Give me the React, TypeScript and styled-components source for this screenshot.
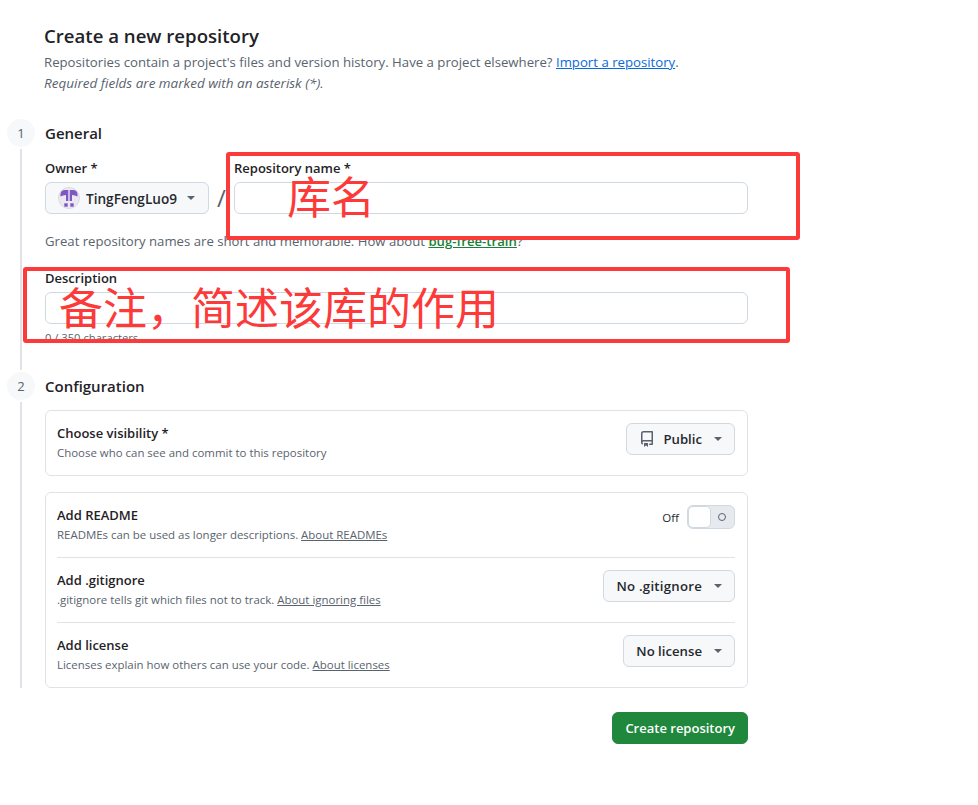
import styled, { createGlobalStyle } from "styled-components";

const GlobalStyle = createGlobalStyle`
  html, body {
    margin: 0;
    background: #fff;
  }
  body {
    font-family: "Open Sans", "Noto Sans", "Liberation Sans", sans-serif;
    color: #1f2328;
    font-size: 14px;
  }
`;

const Page = styled.main`
  position: relative;
  width: 978px;
  height: 805px;
  padding: 23px 0 0 7px;
  box-sizing: border-box;
  overflow: hidden;
`;

const Header = styled.header`
  margin-left: 37px;
  margin-bottom: 25px;
`;

const Title = styled.h1`
  margin: 0 0 4px;
  font-size: 18.6px;
  line-height: 25px;
  font-weight: 600;
`;

const Lead = styled.p`
  margin: 0;
  font-size: 13.2px;
  line-height: 21px;
  color: #59636e;
  white-space: nowrap;

  a {
    color: #0969da;
  }
`;

const Required = styled(Lead)`
  font-size: 13.5px;
  font-style: italic;
`;

const Step = styled.section<{ $height: number }>`
  display: grid;
  grid-template-columns: 28px 703px;
  column-gap: 10px;
  height: ${(props) => props.$height}px;
`;

const Rail = styled.div`
  display: flex;
  flex-direction: column;
  align-items: center;
`;

const StepNumber = styled.div`
  width: 28px;
  height: 28px;
  flex: none;
  border-radius: 50%;
  background: #f6f8fa;
  color: #59636e;
  font-size: 13px;
  display: flex;
  align-items: center;
  justify-content: center;
`;

const RailLine = styled.div`
  width: 2px;
  flex: 1;
  margin: 2px 0;
  background: #dfe3e8;
`;

const StepTitle = styled.h2`
  margin: 0;
  height: 28px;
  font-size: 15px;
  line-height: 28px;
  font-weight: 600;
`;

const OwnerRow = styled.div`
  display: flex;
  align-items: flex-end;
  margin-top: 12px;
`;

const Field = styled.div<{ $grow?: boolean }>`
  display: flex;
  flex-direction: column;
  flex: ${(props) => (props.$grow ? 1 : "none")};
`;

const Label = styled.label`
  font-size: 13px;
  line-height: 18px;
  font-weight: 600;
  margin-bottom: 5px;
`;

const Slash = styled.span`
  width: 25px;
  height: 32px;
  text-align: center;
  font-size: 24px;
  line-height: 32px;
  color: #59636e;
`;

const TextInput = styled.div`
  height: 32px;
  box-sizing: border-box;
  border: 1px solid #d1d9e0;
  border-radius: 6px;
  background: #fff;
`;

const Hint = styled.p`
  margin: 17px 0 0;
  font-size: 13.17px;
  line-height: 20px;
  color: #59636e;
  white-space: nowrap;

  a {
    color: #1a7f37;
    font-weight: 600;
  }
`;

const DescriptionField = styled(Field)`
  margin-top: 18px;
`;

const Counter = styled.div`
  margin-top: 7px;
  font-size: 11.2px;
  line-height: 14px;
  color: #59636e;
`;

const Card = styled.div<{ $gap?: number }>`
  border: 1px solid #dfe3e8;
  border-radius: 6px;
  padding: 0 12px 0 11px;
  margin-top: ${(props) => props.$gap ?? 0}px;
`;

const Row = styled.div<{ $divided?: boolean }>`
  height: ${(props) => (props.$divided ? 65 : 64)}px;
  box-sizing: border-box;
  padding-top: 12px;
  display: flex;
  justify-content: space-between;
  align-items: flex-start;
  border-top: ${(props) => (props.$divided ? "1px solid #dfe3e8" : "none")};
`;

const RowText = styled.div`
  display: flex;
  flex-direction: column;
`;

const RowTitle = styled.span`
  font-size: 13px;
  line-height: 20px;
  font-weight: 600;
`;

const RowHint = styled.span`
  font-size: 11.45px;
  line-height: 20px;
  color: #59636e;

  a {
    color: #59636e;
  }
`;

const SelectButton = styled.button<{ $tracking?: number }>`
  height: 32px;
  box-sizing: border-box;
  padding: 0 12px;
  display: flex;
  align-items: center;
  gap: 8px;
  border: 1px solid #d1d9e0;
  border-radius: 6px;
  background: #f6f8fa;
  color: #25292e;
  font: 600 13.2px "Open Sans", "Noto Sans", sans-serif;
  letter-spacing: ${(props) => props.$tracking ?? 0}px;
  white-space: nowrap;
`;

const OwnerButton = styled(SelectButton)`
  width: 164px;
  gap: 6px;
  font-size: 13.6px;
`;

const Caret = styled.i`
  width: 0;
  height: 0;
  margin-left: 4px;
  border-left: 4px solid transparent;
  border-right: 4px solid transparent;
  border-top: 4px solid #59636e;
`;

const ToggleWrap = styled.div`
  display: flex;
  align-items: center;
  gap: 8px;
  font-size: 11.5px;
  color: #25292e;
`;

const Toggle = styled.div`
  width: 48px;
  height: 24px;
  box-sizing: border-box;
  border: 1px solid #d1d9e0;
  border-radius: 6px;
  background: #e6eaef;
  display: flex;
  align-items: center;
  justify-content: space-between;
  padding-right: 8px;
`;

const Knob = styled.div`
  width: 23px;
  height: 22px;
  box-sizing: border-box;
  border: 1px solid #d1d9e0;
  border-radius: 5px;
  background: #fff;
`;

const OffMark = styled.div`
  width: 8px;
  height: 8px;
  box-sizing: border-box;
  border: 1.5px solid #59636e;
  border-radius: 50%;
`;

const Footer = styled.div`
  display: flex;
  justify-content: flex-end;
  width: 741px;
  margin-top: 22px;
`;

const CreateButton = styled.button`
  height: 32px;
  padding: 0 12px;
  border: 1px solid #1f883d;
  border-radius: 6px;
  background: #1f883d;
  color: #fff;
  font: 600 13px "Open Sans", "Noto Sans", sans-serif;
`;

const Callout = styled.div<{ $x: number; $y: number; $w: number; $h: number }>`
  position: absolute;
  left: ${(props) => props.$x}px;
  top: ${(props) => props.$y}px;
  width: ${(props) => props.$w}px;
  height: ${(props) => props.$h}px;
  box-sizing: border-box;
  border: 4px solid #fd3a3a;
  border-radius: 3px;
`;

const CalloutText = styled.span<{ $x: number; $y: number }>`
  position: absolute;
  left: ${(props) => props.$x}px;
  top: ${(props) => props.$y}px;
  color: #fd3a3a;
  font-family: "Noto Sans CJK SC", sans-serif;
  font-size: 44px;
  line-height: 50px;
  white-space: nowrap;
`;

const Avatar = () => (
  <svg width="22" height="22" viewBox="0 0 22 22" style={{ flex: "none" }}>
    <circle cx="11" cy="11" r="10.5" fill="#ebe9f0" stroke="#dcd9e4" />
    <path d="M2.500 7Q3 3 7 3h3.300v11H8V8Q5 8 2.500 9.500zM19.500 7Q19 3 15 3h-3.300v11H14V8q3 0 5.500 1.500z" fill="#7e57c2" />
    <rect x="6.300" y="16.300" width="3.400" height="3.400" fill="#7e57c2" />
    <rect x="12.300" y="16.300" width="3.400" height="3.400" fill="#7e57c2" />
  </svg>
);

const RepoIcon = () => (
  <svg width="16" height="16" viewBox="0 0 16 16" fill="#59636e">
    <path d="M2 2.5A2.5 2.5 0 0 1 4.5 0h8.75a.75.75 0 0 1 .75.75v12.5a.75.75 0 0 1-.75.75h-2.5a.75.75 0 0 1 0-1.5h1.75v-2h-8a1 1 0 0 0-.714 1.7.75.75 0 1 1-1.072 1.05A2.495 2.495 0 0 1 2 11.5Zm10.5-1h-8a1 1 0 0 0-1 1v6.708A2.486 2.486 0 0 1 4.5 9h8ZM5 12.25a.25.25 0 0 1 .25-.25h3.5a.25.25 0 0 1 .25.25v3.25a.25.25 0 0 1-.4.2l-1.45-1.087a.249.249 0 0 0-.3 0L5.4 15.7a.25.25 0 0 1-.4-.2Z" />
  </svg>
);

const App = () => {
  return (
    <Page>
      <GlobalStyle />
      <Header>
        <Title>Create a new repository</Title>
        <Lead>
          Repositories contain a project's files and version history. Have a project elsewhere?{" "}
          <a href="#import">Import a repository</a>.
        </Lead>
        <Required>Required fields are marked with an asterisk (*).</Required>
      </Header>

      <Step $height={253}>
        <Rail>
          <StepNumber>1</StepNumber>
          <RailLine />
        </Rail>
        <div>
          <StepTitle>General</StepTitle>
          <OwnerRow>
            <Field>
              <Label>Owner *</Label>
              <OwnerButton>
                <Avatar />
                TingFengLuo9
                <Caret />
              </OwnerButton>
            </Field>
            <Slash>/</Slash>
            <Field $grow>
              <Label>Repository name *</Label>
              <TextInput />
            </Field>
          </OwnerRow>
          <Hint>
            Great repository names are short and memorable. How about <a href="#name">bug-free-train</a>?
          </Hint>
          <DescriptionField>
            <Label>Description</Label>
            <TextInput />
            <Counter>0 / 350 characters</Counter>
          </DescriptionField>
        </div>
      </Step>

      <Step $height={318}>
        <Rail>
          <StepNumber>2</StepNumber>
          <RailLine />
        </Rail>
        <div>
          <StepTitle>Configuration</StepTitle>
          <Card $gap={10}>
            <Row>
              <RowText>
                <RowTitle>Choose visibility *</RowTitle>
                <RowHint>Choose who can see and commit to this repository</RowHint>
              </RowText>
              <SelectButton>
                <RepoIcon />
                Public
                <Caret />
              </SelectButton>
            </Row>
          </Card>
          <Card $gap={16}>
            <Row>
              <RowText>
                <RowTitle>Add README</RowTitle>
                <RowHint>
                  READMEs can be used as longer descriptions. <a href="#readme">About READMEs</a>
                </RowHint>
              </RowText>
              <ToggleWrap>
                Off
                <Toggle>
                  <Knob />
                  <OffMark />
                </Toggle>
              </ToggleWrap>
            </Row>
            <Row $divided>
              <RowText>
                <RowTitle>Add .gitignore</RowTitle>
                <RowHint>
                  .gitignore tells git which files not to track. <a href="#ignore">About ignoring files</a>
                </RowHint>
              </RowText>
              <SelectButton $tracking={0.25}>
                No .gitignore
                <Caret />
              </SelectButton>
            </Row>
            <Row $divided>
              <RowText>
                <RowTitle>Add license</RowTitle>
                <RowHint>
                  Licenses explain how others can use your code. <a href="#license">About licenses</a>
                </RowHint>
              </RowText>
              <SelectButton>
                No license
                <Caret />
              </SelectButton>
            </Row>
          </Card>
        </div>
      </Step>

      <Footer>
        <CreateButton>Create repository</CreateButton>
      </Footer>

      <Callout $x={226} $y={152} $w={574} $h={88} />
      <CalloutText $x={287} $y={170}>库名</CalloutText>
      <Callout $x={23} $y={267} $w={767} $h={76} />
      <CalloutText $x={59} $y={281}>备注，简述该库的作用</CalloutText>
    </Page>
  );
};

export default App;
